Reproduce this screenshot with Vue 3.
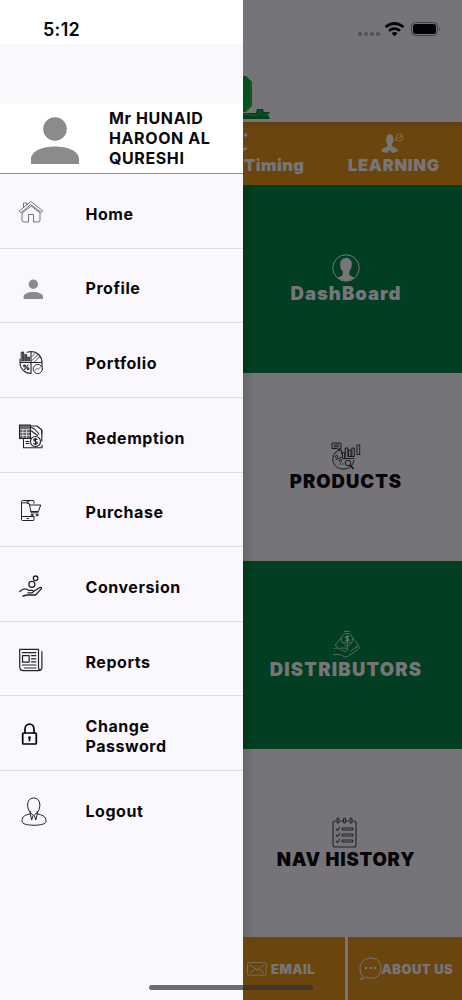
<script setup>
const items = [
  { id: 'home', label: 'Home' },
  { id: 'profile', label: 'Profile' },
  { id: 'portfolio', label: 'Portfolio' },
  { id: 'redemption', label: 'Redemption' },
  { id: 'purchase', label: 'Purchase' },
  { id: 'conversion', label: 'Conversion' },
  { id: 'reports', label: 'Reports' },
  { id: 'password', label: 'Change Password' },
  { id: 'logout', label: 'Logout' }
]
</script>

<template>
  <div class="screen">
    <aside class="drawer">
      <div class="clock">5:12</div>
      <div class="spacer"></div>
      <header class="user">
        <svg class="avatar" width="48" height="48" viewBox="0 0 48 48" fill="#8b8a8c">
          <circle cx="24" cy="12" r="11.8" />
          <path d="M0 47v-5c0-8 12-12.500 24-12.500s24 4.500 24 12.500v5z" />
        </svg>
        <div class="name">Mr HUNAID<br />HAROON AL<br />QURESHI</div>
      </header>
      <nav>
        <div v-for="item in items" :key="item.id" class="row">
          <svg class="icon" :class="item.id" width="30" height="32" viewBox="0 0 30 32" fill="none" stroke="#222124" stroke-width="1.1" stroke-linejoin="round" stroke-linecap="round">
            <g v-if="item.id === 'home'" stroke="#656468" stroke-width=".9">
              <path d="M2.500 12.800 13.800 3.500 25.700 12.800 24.300 14.500 13.800 6.500 4.200 14.500z" />
              <path d="M6.500 9.500V5h3.300v1.600M13.800 8.300 5 15.200V22q0 2 2 2h4.500v-7.500h5V24H21q2 0 2-2v-6.800z" />
            </g>
            <g v-else-if="item.id === 'profile'" fill="#8b8a8c" stroke="none">
              <circle cx="16.300" cy="10.300" r="4.700" />
              <path d="M6.600 25v-2c0-3.200 4.700-5 9.700-5s9.700 1.800 9.700 5v2z" />
            </g>
            <g v-else-if="item.id === 'portfolio'">
              <path d="M14 3.500V25.500M3 14.500H25M14 3.500C20 3.500 25 8.500 25 14.500v5M3 14.500C3 21 8 25.500 14 25.500M10 4.200 14 3.500M3 11v3.500" />
              <path d="M4.500 4h2.300v9H4.500zM8 6.500h1.800V13H8zM11 9h1.500v4H11z" fill="#4b4a4d" stroke-width=".7" />
              <path d="m15 8.500 3-3M15 12.500l6-6M17.500 14l5.500-5.500" stroke-width=".8" />
              <path d="m7.500 21.500 3.500-4.500" /><circle cx="7.500" cy="18" r=".9" /><circle cx="11" cy="20.800" r=".9" />
              <circle cx="20.800" cy="21" r="4.600" fill="#fbf8fd" stroke-width=".9" /><path d="m18.200 22 2-1.500 1 .7 2-1.700" stroke-width=".7" />
            </g>
            <g v-else-if="item.id === 'redemption'">
              <path d="M14 4h6l4.800 4V12M6.500 17.500v8.200H25v-2.500" />
              <path d="m14.500 5.500 3 1.500 4.500 5M14.500 9l6 4.500M24.800 8v11" />
              <path d="M2.500 3h11v13.500h-11z" fill="#6b6a6d" /><path d="M3.500 7.500h9M3.500 10.500h9M3.500 13.500h9M6 7.500v8M9.500 7.500v8" stroke="#dcdade" stroke-width=".8" />
              <path d="M9 19.500h3M9 21.500h3" /><circle cx="18.500" cy="19.500" r="5" fill="#fbf8fd" />
              <path d="M20 17.500c-1-1-3.300-.8-3.300.6s3.600 1.200 3.600 2.700-2.500 1.800-3.700.5M18.500 16.200v6.600" />
            </g>
            <g v-else-if="item.id === 'purchase'" stroke-width="1">
              <path d="M17 6.200V4.500q0-1-1-1H5.500q-1 0-1 1v18q0 1 1 1H16q1 0 1-1v-3M4.500 5.800h6M4.500 19.500h12.300M10 4.700h2M10 21.500h1.500" />
              <path d="M10.500 6.500h1.700l2 9.300h7M12.600 8H23.700l-2.300 6.500h-7.500" /><circle cx="15" cy="18" r="1" /><circle cx="20" cy="18" r="1" />
            </g>
            <g v-else-if="item.id === 'conversion'" stroke-width="1.300">
              <circle cx="14.900" cy="12.300" r="3" /><circle cx="18.600" cy="6.300" r="2.300" />
              <path d="M2.800 19.500c3.500-3.500 6.500-3 8.700-1.200h3.500c2 0 1.500 2.500-.5 2.500h-3.500M16.500 19.500l6-3.800c2-1 2.800.2 1.300 1.700L18.500 23H10l-4 1" />
            </g>
            <g v-else-if="item.id === 'reports'" stroke-width="1.200">
              <path d="M2.700 3.300h18.800V21q0 3.200 2 3.200M2.700 3.300v17.500Q2.700 24.700 6.500 24.700h15Q24.900 24.700 24.900 21V5.500M5.500 6.700h13.300M5.500 9.700h6.700v6.500H5.500zM14.500 9.700h4.300M14.500 12.800h4.300M14.500 15.900h4.300M5.500 19h13.300M7.500 22h11.300" />
            </g>
            <g v-else-if="item.id === 'password'" stroke="#000" stroke-width="1.700">
              <rect x="5.700" y="12" width="13.600" height="11" rx=".8" />
              <path d="M8 12V8.300c0-7 9-7 9 0V12M12.500 17v2.500" /><circle cx="12.500" cy="16.500" r="1.300" fill="#000" stroke="none" />
            </g>
            <g v-else stroke-width="1">
              <path d="M13.300 16.500C9.500 13 8.800 2 16.700 2S24 13 20.200 16.500M13.300 15.500v2C8.500 19.500 5 19.500 5 25.500c0 5 24 5 24 0 0-6-4-6-8.800-8v-2" />
              <path d="m13.500 17 3.200 2.500 3.300-2.500M13.300 18l1.400 6 1.200-4M20.300 18l-1.500 6-1.300-4" />
            </g>
          </svg>
          <span class="label">{{ item.label }}</span>
        </div>
      </nav>
    </aside>

    <main class="content">
      <section class="top">
        <svg width="219" height="122" viewBox="243 0 219 122">
          <g fill="#535154"><circle cx="360" cy="34" r="2" /><circle cx="366" cy="34" r="2" /><circle cx="372" cy="34" r="2" /><circle cx="378" cy="34" r="2" /></g>
          <g fill="none" stroke="#030204" stroke-width="2.700"><path d="M385.500 27q9-7 18 0M389 30.700q5.500-4.200 11 0" /></g>
          <path d="M391.500 33.200q3-2.300 6 0l-3 3z" fill="#030204" />
          <rect x="411.500" y="22.500" width="26" height="13" rx="3.800" fill="none" stroke="#454347" /><rect x="413" y="24" width="23" height="10" rx="2.500" fill="#030204" /><path d="M439 27q2 2 0 4z" fill="#454347" />
          <path d="M243 76h3l6 6v24l-6 6h-3z" fill="#04501f" /><path d="M250.500 82v24l-6 5" stroke="#376323" fill="none" stroke-width=".7" />
          <path d="M243 113h13l1-4h6l1 3h6l-2 3 2 4h-27z" fill="#04421c" /><path d="m244 114 13 2 3-5 3 5 5-2" fill="none" stroke="#2b6532" stroke-width=".7" />
        </svg>
      </section>
      <section class="tabs">
        <svg class="tabicons" width="219" height="32" viewBox="243 122 219 32">
          <circle cx="245.500" cy="135" r="1.800" fill="#77757a" /><path d="M243 149.500q3 0 3-2" stroke="#77757a" stroke-width="2" fill="none" />
          <path d="M386.200 139c0-6.500 7.200-6.500 7.200 0 0 3-.7 4-1.500 5v2l4.500 2.500q1.500 1 1.500 3l-5.500 1.500-2.500-3-3 3-5.500-1.500q0-2 1.500-3l4.700-2.500v-2c-1-1-1.400-2-1.400-5z" fill="#77757a" />
          <circle cx="399.500" cy="137.500" r="3.500" fill="none" stroke="#8a6d49" /><path d="m393.500 141 3-2M397.500 138.500l1.500-1 1 .5 2-2" stroke="#8a6d49" fill="none" />
        </svg>
        <span class="timing">Timing</span><span class="learning">LEARNING</span>
      </section>
      <section class="cell green">
        <svg width="28" height="28" viewBox="0 0 28 28" fill="#77757a"><circle cx="14" cy="14" r="13.200" fill="none" stroke="#77757a" /><path d="M8.200 10c-.5-8 12-8 11.600 0 0 4-1.400 6-2.500 7.500v3.500l5.200 3Q14 30 5.500 24l5.200-3v-3.500C9 16 8.200 14 8.200 10z" /></svg>
        <span>DashBoard</span>
      </section>
      <section class="cell">
        <svg width="30" height="28" viewBox="0 0 30 28" fill="none" stroke="#1b191c" stroke-width="1">
          <path d="M1 1h9v5.500H8.500v2l-2-2H1zM2.800 3h5.400M2.800 4.800h5.400" />
          <path d="M10.500 7.800Q2 9 1.800 17c.2 13 20 13.500 21 1M10.500 8v4M11.500 16.500h12M11.500 16.500V10.500h2.300v6M14.200 16.500V6h2.700v8.500h6.500V6h-2.500v8.500M17.500 14V8h2.500v6" />
          <rect x="26" y="3" width="2.700" height="9.500" />
          <path d="m4.500 18 6-3" /><circle cx="5.500" cy="14.500" r="1.200" /><circle cx="9.500" cy="18.500" r="1.200" /><path d="M8.500 22h5" stroke-dasharray="1.500 1" />
          <circle cx="17" cy="21" r="2.800" fill="#767478" /><path d="m19 23 3.500 3.800" stroke-width="1.800" />
        </svg>
        <span>PRODUCTS</span>
      </section>
      <section class="cell green">
        <svg width="28" height="28" viewBox="0 0 28 28" fill="none" stroke="#65776c" stroke-width=".8">
          <path d="M12 1.500h6M13 3.500h4M13 3.500q-6 4-2.500 9.500h9Q22.500 7 17 3.500M9.500 7.500 3 15l3 2.500M20.500 7.500 26.500 15 23 18" />
          <path d="M1.500 18.500c6-2 8 3 12 2.700 3 0 3-2.500 0-3l-5-.2M1 24.500h6c3 0 5 3 8 2.500l11-7.500c3-2.500 1-4-1.500-2.300l-6 3.800" />
          <path d="M17 7c-.7-1.200-3.500-1-3.500.4s3.500 1 3.500 2.500-2.800 1.600-3.700.3M15.200 5v7" stroke-width="1.100" /><path d="M15.500 13v6M12 15l3.500 1.500L19 14" stroke="#79614b" />
        </svg>
        <span class="distributors">DISTRIBUTORS</span>
      </section>
      <section class="cell">
        <svg class="history-icon" width="25" height="31" viewBox="0 0 25 31" fill="none" stroke="#242225" stroke-width="1.100"><path d="M4 4H2.500Q1 4 1 6v22q0 2 2 2h19q2 0 2-2V6q0-2-2-2h-1M8 4h3M14 4h3" /><g><rect x="5" y="1" width="2" height="5" rx="1" /><rect x="11.500" y="1" width="2" height="5" rx="1" /><rect x="18" y="1" width="2" height="5" rx="1" /><rect x="10" y="11" width="11" height="2" rx="1" /><rect x="10" y="17" width="11" height="2" rx="1" /><rect x="10" y="23" width="11" height="2" rx="1" /></g><path d="m4 12 1.500 1.500L8 10M4 18l1.500 1.500L8 16M4 24l1.500 1.500L8 22" /></svg>
        <span class="history">NAV HISTORY</span>
      </section>
      <footer>
        <div class="email"><svg width="20" height="14" viewBox="0 0 20 14" fill="none" stroke="#77736c" stroke-width=".9"><rect x=".6" y=".6" width="18.500" height="12.500" rx="1" /><path d="m3 3 7 5 7-5M3 11l5-4M17 11l-5-4" /></svg><span>EMAIL</span></div>
        <div class="about"><svg width="23" height="24" viewBox="0 0 23 24" fill="none" stroke="#77757a"><path d="M4 20Q0 15 1 10C3-2 22-2 22 11c0 10-9 12-15 9-2 2-4 2-6 2 2 0 3-1 3-2z" /><g fill="#77757a" stroke="none"><circle cx="7" cy="11" r="1.300" /><circle cx="11.500" cy="11" r="1.300" /><circle cx="16" cy="11" r="1.300" /></g></svg><span>ABOUT US</span></div>
      </footer>
    </main>
    <div class="home-indicator"></div>
  </div>
</template>

<style scoped>
.screen { position: relative; display: flex; width: 462px; height: 1000px; overflow: hidden; font-family: Inter, "Liberation Sans", sans-serif; }
.drawer { width: 243px; height: 1000px; background: #fbf8fd; color: #09080a; flex: none; }
.clock { height: 44px; box-sizing: border-box; padding: 19px 0 0 43px; background: #fff; font-size: 18px; line-height: 22px; font-weight: 600; letter-spacing: .3px; }
.spacer { height: 60px; }
.user { height: 70px; box-sizing: border-box; border-bottom: 1px solid #929094; background: #fff; display: flex; }
.avatar { margin: 12.500px 0 0 30.500px; flex: none; }
.name { margin: 4px 0 0 30.500px; font-size: 16px; line-height: 20px; font-weight: 700; letter-spacing: .6px; white-space: nowrap; }
.row { height: 74.650px; box-sizing: border-box; display: flex; align-items: center; border-bottom: 1px solid #dfdde1; }
.row:last-child { border: 0; }
.icon { flex: none; margin: 7px 38.500px 0 17px; }
.icon.logout { margin-top: 8px; }
.icon.profile { margin-top: 9px; }
.row .label { padding-top: 6px; width: 115px; line-height: 20px; font-size: 16px; font-weight: 700; letter-spacing: .55px; }
.content { width: 219px; height: 1000px; display: flex; flex-direction: column; color: #77757a; background: #767478; }
.content svg { display: block; flex: none; }
.top { height: 122px; }
.tabs { height: 63px; background: linear-gradient(#5b3c12, #6b450e 6px); display: grid; grid-template-columns: 105px 114px; grid-template-rows: 32px 31px; }
.tabicons { grid-column: 1 / 3; }
.tabs span { font-size: 16.500px; font-weight: 900; line-height: 22px; letter-spacing: .4px; white-space: nowrap; }
.timing { padding-left: 1px; }
.tabs .learning { letter-spacing: .7px; }
.cell { height: 188px; display: flex; flex-direction: column; align-items: center; justify-content: center; padding-right: 13px; background: linear-gradient(90deg, #68666a, #767478 12px); box-sizing: border-box; }
.cell.green { background: linear-gradient(90deg, #023819, #023f22 12px); }
.cell span { font-size: 18.500px; line-height: 22px; font-weight: 900; letter-spacing: 1px; white-space: nowrap; }
.cell .distributors { letter-spacing: 1.200px; }
.cell .history { letter-spacing: .8px; }
.cell:not(.green) span { color: #060507; }
.history-icon { margin-right: 4px; }
footer { height: 63px; display: grid; grid-template-columns: 102px 1fr; gap: 3px; }
footer > div { display: flex; align-items: center; background: #6b450e; font-size: 13px; font-weight: 900; letter-spacing: .45px; white-space: nowrap; }
.email { padding-left: 4px; }
.email span { margin-left: 4px; }
.about { padding-left: 10.500px; }
.home-indicator { position: absolute; left: 149px; top: 985px; width: 164px; height: 5px; border-radius: 3px; background: linear-gradient(90deg, #6d6c6f 0 94px, #403529 94px); }
</style>

<style>
body { margin: 0; overflow: hidden; }
</style>
